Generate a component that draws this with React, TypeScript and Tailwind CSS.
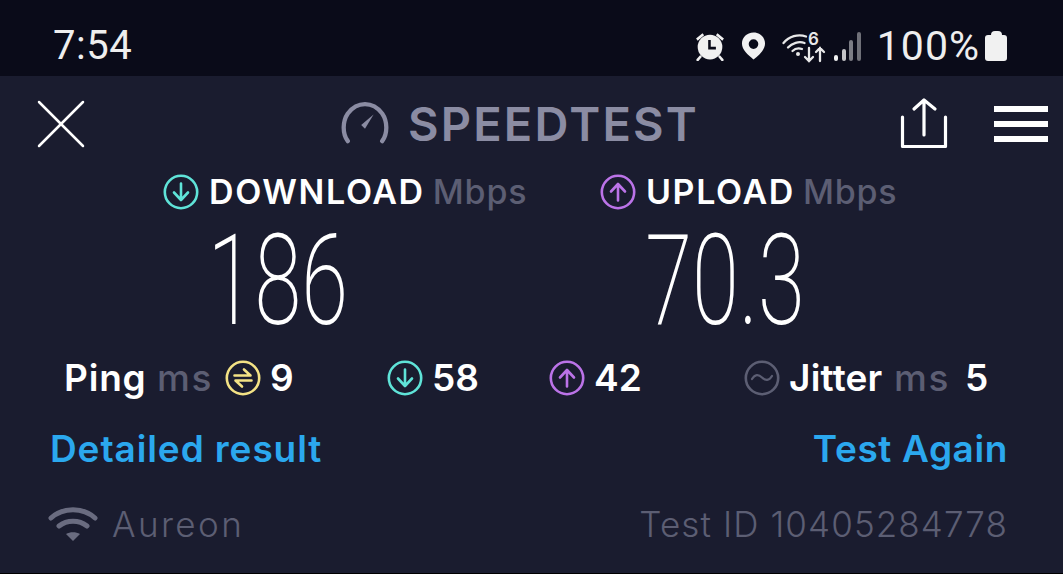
import { X } from "lucide-react";

const sans = "font-['Inter','Noto_Sans',sans-serif]";

function CircleIcon({ color, size = 36, children }: { color: string; size?: number; children: React.ReactNode }) {
  return (
    <svg width={size} height={size} viewBox="0 0 36 36" fill="none" stroke={color} strokeLinecap="round" strokeLinejoin="round" className="shrink-0">
      <circle cx="18" cy="18" r="16.2" strokeWidth="2.6" />
      {children}
    </svg>
  );
}

const DownIcon = () => (
  <CircleIcon color="#5fe3d8">
    <path d="M18 9.5v16M11 18.5l7 7.5 7-7.5" strokeWidth="2.6" />
  </CircleIcon>
);

const UpIcon = () => (
  <CircleIcon color="#bb73e8">
    <path d="M18 26.5v-16M11 17.5l7-7.5 7 7.5" strokeWidth="2.6" />
  </CircleIcon>
);

function StatusIcons() {
  return (
    <div className="flex items-center">
      <svg width="30" height="30" viewBox="2 2 28 28" fill="#f1f1f1" className="mr-[16px]">
        <circle cx="16" cy="17" r="11.5" />
        <path d="M3 9l6-5 1.500 2-6 5zM29 9l-6-5-1.500 2 6 5z" />
        <path d="M7 26l-2.500 3M25 26l2.500 3" stroke="#f1f1f1" strokeWidth="2.400" strokeLinecap="round" />
        <path d="M15.500 10.500v7.500h6" stroke="#0a0b19" strokeWidth="2.400" fill="none" />
      </svg>
      <svg width="25" height="30" viewBox="0 0 26 30" className="mr-[16px]">
        <path fillRule="evenodd" fill="#f1f1f1" d="M13 1C6 1 1 6.200 1 12.500 1 19 7 24 13 29c6-5 12-10 12-16.500C25 6.200 20 1 13 1zm0 7a5 5 0 1 1 0 10 5 5 0 0 1 0-10z" />
      </svg>
      <svg width="44" height="32" viewBox="0 0 44 32" fill="none" stroke="#e8e8e8" strokeLinecap="round" strokeWidth="2.300" className="mr-[8px] overflow-visible">
        <path d="M1.500 13C7 6.500 16 3.500 24 6.500" />
        <path d="M6 17.500C10 13 17 11 22.500 13" />
        <path d="M10.500 21C13 18.500 17 18 20 19" />
        <circle cx="16" cy="24" r="2" fill="#e8e8e8" stroke="none" />
        <path d="M27 18v13M23 27l4 4 4-4M38 31V18M34 22l4-4 4 4" />
        <text x="26" y="15" fontSize="17" fontWeight="600" fill="#e8e8e8" stroke="none" fontFamily="Inter, sans-serif">6</text>
      </svg>
      <div className="flex items-end gap-[3.5px] mr-[16px] h-[30px]">
        <div className="w-[4px] h-[6px] rounded-sm bg-[#f1f1f1]" />
        <div className="w-[4px] h-[12px] rounded-sm bg-[#c4c4c8]" />
        <div className="w-[4px] h-[21px] rounded-sm bg-[#7c7d85]" />
        <div className="w-[4px] h-[29px] rounded-sm bg-[#6f7078]" />
      </div>
      <span className="text-[41px] leading-none tracking-[1px] text-[#eeeeee] font-['Roboto',sans-serif]">100%</span>
      <div className="ml-[5px] flex flex-col items-center">
        <div className="h-[4px] w-[11px] rounded-t-sm bg-[#f1f1f1]" />
        <div className="h-[26px] w-[22px] rounded-[3px] bg-[#f1f1f1]" />
      </div>
    </div>
  );
}

function BigStat({ icon, label, value, valueClass }: { icon: React.ReactNode; label: string; value: string; valueClass: string }) {
  return (
    <div className="flex flex-col items-center">
      <div className="flex items-center h-[36px] self-start whitespace-nowrap">
        {icon}
        <span className="ml-[10px] text-[34px] leading-none tracking-[1.6px] font-semibold text-white">{label}</span>
        <span className="ml-[8px] text-[34px] leading-none tracking-[0.8px] font-medium text-[#5c5e73]">Mbps</span>
      </div>
      <div className={`mt-[15px] h-[112px] leading-[112px] font-['Roboto',sans-serif] font-extralight text-[127px] text-white scale-x-[0.67] ${valueClass}`}>
        {value}
      </div>
    </div>
  );
}

export default function App() {
  return (
    <div className={`w-[1063px] h-[574px] overflow-hidden flex flex-col bg-[#1a1c2f] border-b border-black ${sans}`}>
      <div className="h-[76px] shrink-0 bg-[#0a0b19] flex items-center justify-between pl-[53px] pr-[56px] pt-[16px]">
        <span className="text-[40px] leading-none tracking-[0.5px] text-[#eeeeee] font-['Roboto',sans-serif]">7:54</span>
        <StatusIcons />
      </div>

      <div className="relative h-[94px] shrink-0 flex items-center justify-center pr-[23px]">
        <X className="absolute left-[17px] top-[4px] text-white" size={88} strokeWidth={2.500} absoluteStrokeWidth />
        <svg width="48" height="42" viewBox="0 0 50 44" fill="none" className="mr-[19px]">
          <path d="M7 41C1 33 1.500 20 7 12 17 -1 33 -1 43 12c5.500 8 6 21 0 29" stroke="#8b8ca3" strokeWidth="4.500" strokeLinecap="round" />
          <path d="M34 13l-9 15-4-4z" fill="#8b8ca3" />
        </svg>
        <span className="text-[47px] leading-none tracking-[2.2px] font-semibold text-[#8b8ca3]">SPEEDTEST</span>
        <svg width="50" height="54" viewBox="0 0 50 54" fill="none" stroke="#ffffff" strokeWidth="3.200" strokeLinecap="round" strokeLinejoin="round" className="absolute left-[899px] top-[21px]">
          <path d="M3.500 20v29.500h43V20M25 38V3M15 12 25 3l11 9" />
        </svg>
        <div className="absolute left-[994px] top-[30px] flex flex-col gap-[9px]">
          <div className="h-[6px] w-[54px] bg-white" />
          <div className="h-[6px] w-[54px] bg-white" />
          <div className="h-[6px] w-[54px] bg-white" />
        </div>
      </div>

      <div className="h-[185px] shrink-0 pt-[4px] flex">
        <div className="w-[365px] ml-[163px] shrink-0">
          <BigStat icon={<DownIcon />} label="DOWNLOAD" value="186" valueClass="mr-[135px]" />
        </div>
        <div className="w-[294px] ml-[72px] shrink-0">
          <BigStat icon={<UpIcon />} label="UPLOAD" value="70.3" valueClass="mr-[44px]" />
        </div>
      </div>

      <div className="h-[45px] shrink-0 flex items-center pl-[64px] text-[37px] leading-none font-semibold text-white">
        <span className="w-[93px] tracking-[0.8px]">Ping</span>
        <span className="w-[68px] tracking-[1.6px] font-medium text-[#5c5e73]">ms</span>
        <CircleIcon color="#f3e285">
          <path d="M9.500 15.500h16l-6.500-6M26.500 20.500h-16l6.500 6" strokeWidth="2.600" />
        </CircleIcon>
        <span className="ml-[9px] w-[117px]">9</span>
        <DownIcon />
        <span className="ml-[9px] w-[117px]">58</span>
        <UpIcon />
        <span className="ml-[9px] w-[150px]">42</span>
        <CircleIcon color="#5c5e73">
          <path d="M8 19c3-5 6.500-5 10-1.500s7 3.500 10-1.500" strokeWidth="2.200" />
        </CircleIcon>
        <span className="ml-[9px] w-[105px] tracking-[0.2px]">Jitter</span>
        <span className="w-[71px] tracking-[1.6px] font-medium text-[#5c5e73]">ms</span>
        <span>5</span>
      </div>

      <div className="flex-1 flex flex-col pl-[50px] pr-[55px]">
        <div className="flex justify-between items-center h-[96px] shrink-0 text-[37px] leading-none tracking-[0.6px] font-semibold text-[#2ba8ee]">
          <span className="tracking-[0.9px]">Detailed result</span>
          <span>Test Again</span>
        </div>
        <div className="flex justify-between items-center h-[57px] shrink-0 text-[35px] leading-none font-light text-[#5c5e73]">
          <div className="flex items-center">
            <svg width="50" height="40" viewBox="0 0 50 40" fill="none" stroke="#6a6c80" strokeWidth="5" strokeLinecap="round" className="-ml-[2px]">
              <path d="M3 13C15 2 35 2 47 13M11 21c8-6.500 20-6.500 28 0" />
              <path d="M18 29c4-2.500 10-2.500 14 0l-7 7z" fill="#6a6c80" stroke="none" />
            </svg>
            <span className="ml-[14px] tracking-[2.4px]">Aureon</span>
          </div>
          <span className="tracking-[1.1px]">Test ID 10405284778</span>
        </div>
      </div>
    </div>
  );
}
